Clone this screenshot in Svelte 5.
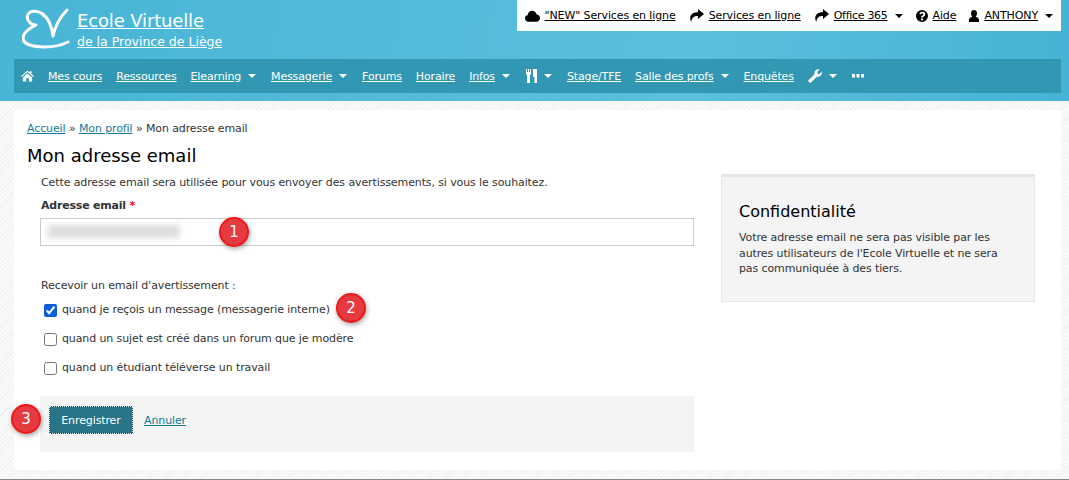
<script lang="ts">
  const navItems = [
    { label: 'Mes cours' },
    { label: 'Ressources' },
    { label: 'Elearning', caret: true },
    { label: 'Messagerie', caret: true },
    { label: 'Forums' },
    { label: 'Horaire' },
    { label: 'Infos', caret: true },
    { icon: 'food', caret: true },
    { label: 'Stage/TFE' },
    { label: 'Salle des profs', caret: true },
    { label: 'Enquêtes' },
    { icon: 'wrench', caret: true },
    { icon: 'more' }
  ]
</script>

<div class="page">
  <header class="header">
    <div class="brand">
      <svg class="logo" viewBox="0 0 50 44" width="50" height="44" aria-hidden="true">
        <path d="M21 7 C16 4 10 3 7 6 C3 10 7 18 14 18 C8 21 1 26 1 31 C1 37 10 40 23 40 C32 40 40 38 46 35" />
        <path d="M21 8 C26 10 30 20 31 29 C33 20 38 10 45 3" />
      </svg>
      <div class="brand-text">
        <a href="#top" class="brand-title">Ecole Virtuelle</a>
        <a href="#top" class="brand-sub">de la Province de Liège</a>
      </div>
    </div>

    <ul class="toplinks">
      <li>
        <svg class="ico" viewBox="0 0 16 12" width="15" height="12"><path d="M4 12 C1 12 0 10 0 8.300 C0 6.500 1.300 5.300 2.800 5.200 C3 2.500 5 0.500 7.700 0.500 C10 0.500 11.700 2 12.200 4 C14.300 4.200 16 5.800 16 8 C16 10.300 14.300 12 12 12 Z" /></svg>
        <a href="#top">"NEW" Services en ligne</a>
      </li>
      <li>
        <svg class="ico" viewBox="0 0 15 13" width="15" height="13"><path d="M9 0 L15 5 L9 10 L9 7 C5 7 3 8 2.300 13 C0.500 9.500 0 3.500 9 3 Z" /></svg>
        <a href="#top">Services en ligne</a>
      </li>
      <li>
        <svg class="ico" viewBox="0 0 15 13" width="15" height="13"><path d="M9 0 L15 5 L9 10 L9 7 C5 7 3 8 2.300 13 C0.500 9.500 0 3.500 9 3 Z" /></svg>
        <a href="#top" class="office">Office 365</a><span class="caret dark"></span>
      </li>
      <li>
        <svg class="ico" viewBox="0 0 12 12" width="12" height="12"><path fill-rule="evenodd" d="M6 0 A6 6 0 1 0 6 12 A6 6 0 1 0 6 0 Z M5 8.500 H7 V10.300 H5 Z M5 7.600 C5 5.400 7.300 5.500 7.300 4.200 C7.300 3.100 5.500 3 4.600 4.400 L3.400 3.400 C5 1 9.300 1.500 9.300 4.200 C9.300 6.200 7 6.100 7 7.600 Z" /></svg>
        <a href="#top">Aide</a>
      </li>
      <li>
        <svg class="ico" viewBox="0 0 10 12" width="10" height="12"><path d="M5 0 C7 0 8 1.500 8 3.300 C8 4.800 7.300 6 6.700 6.500 C7 7.300 10 7.500 10 10 V12 H0 V10 C0 7.500 3 7.300 3.300 6.500 C2.700 6 2 4.800 2 3.300 C2 1.500 3 0 5 0 Z" /></svg>
        <a href="#top">ANTHONY</a><span class="caret dark"></span>
      </li>
    </ul>

    <nav class="nav">
      <svg class="nav-home" viewBox="0 0 14 12" width="13" height="12"><path d="M7 0 L9.500 2.200 V1 H11.300 V3.800 L14 6.300 L13.200 7.200 L7 1.800 L0.800 7.200 L0 6.300 Z M2 7.500 L7 3.200 L12 7.500 V12 H8.500 V8.500 H5.500 V12 H2 Z" /></svg>
      {#each navItems as item}
        <span class="nav-item" class:food={item.icon === 'food'}>
          {#if item.label}
            <a href="#top">{item.label}</a>
          {:else if item.icon === 'food'}
            <svg viewBox="0 0 12 14" width="12" height="14"><path d="M0 0 H1 V3 H2 V0 H3 V3 H4 V0 H5 V5 L4 6 V14 H1 V6 L0 5 Z M7 0 H11 V14 H8.500 V8 H7 Z" /></svg>
          {:else if item.icon === 'wrench'}
            <svg viewBox="0 0 13 13" width="14" height="14"><path d="M0.500 10.300 L6 5 C5.300 2.500 7.500 -0.300 11 0.300 L8.500 2.800 L9 4.300 L10.500 4.800 L13 2.300 C13.400 5.500 10.800 8 8.200 7.200 L2.800 12.600 C1.800 13.400 -0.300 11.500 0.500 10.300 Z" /></svg>
          {:else}
            <svg viewBox="0 0 12 4" width="12" height="4"><path d="M0 0 H3 V3.500 H0 Z M4.500 0 H7.500 V3.500 H4.500 Z M9 0 H12 V3.500 H9 Z" /></svg>
          {/if}
          {#if item.caret}<span class="caret"></span>{/if}
        </span>
      {/each}
    </nav>
  </header>

  <main class="panel">
    <p class="crumbs"><a href="#top">Accueil</a> » <a href="#top">Mon profil</a> » Mon adresse email</p>
    <h1>Mon adresse email</h1>

    <div class="columns">
      <form class="form">
        <p class="intro">Cette adresse email sera utilisée pour vous envoyer des avertissements, si vous le souhaitez.</p>
        <label class="field-label" for="email">Adresse email <span class="req">*</span></label>
        <div class="input-wrap">
          <input id="email" type="text" />
          <span class="blur"></span>
          <span class="badge badge-1">1</span>
        </div>

        <p class="legend">Recevoir un email d'avertissement :</p>
        <label class="check">
          <input type="checkbox" checked />
          <span class="check-text">quand je reçois un message (messagerie interne)</span>
          <span class="badge badge-2">2</span>
        </label>
        <label class="check">
          <input type="checkbox" />
          <span class="check-text">quand un sujet est créé dans un forum que je modère</span>
        </label>
        <label class="check">
          <input type="checkbox" />
          <span class="check-text">quand un étudiant téléverse un travail</span>
        </label>

        <div class="actions">
          <span class="badge badge-3">3</span>
          <button type="button">Enregistrer</button>
          <a href="#top">Annuler</a>
        </div>
      </form>

      <aside class="card">
        <h2>Confidentialité</h2>
        <p>Votre adresse email ne sera pas visible par les autres utilisateurs de l'Ecole Virtuelle et ne sera pas communiquée à des tiers.</p>
      </aside>
    </div>
  </main>
  <div class="foot-line"></div>
</div>

<style>
  :global(body) {
    margin: 0;
  }

  .page {
    width: 1069px;
    height: 480px;
    overflow: hidden;
    font-family: "DejaVu Sans", Verdana, sans-serif;
    font-size: 11px;
    letter-spacing: -0.11px;
    color: #333;
    display: flex;
    flex-direction: column;
    background: repeating-linear-gradient(135deg, #f1f1f1 0 1px, #fafafa 1px 3px);
  }

  a {
    color: inherit;
  }

  .header {
    height: 101px;
    flex: none;
    box-sizing: border-box;
    padding: 0 8px 0 14px;
    background: linear-gradient(100deg, #47b5d6 0%, #5bbfdd 65%, #45b3d5 100%);
    display: grid;
    grid-template-columns: auto 1fr;
    grid-template-rows: 59px 34px;
  }

  .brand {
    display: flex;
    gap: 5px;
    padding: 7px 0 0 8px;
    color: #fff;
  }

  .logo {
    fill: none;
    stroke: #fff;
    stroke-width: 3;
    stroke-linecap: round;
    stroke-linejoin: round;
  }

  .brand-text {
    display: flex;
    flex-direction: column;
    align-items: flex-start;
    padding-top: 3px;
  }

  .brand-title {
    font-size: 18px;
    line-height: 22px;
    letter-spacing: -0.14px;
  }

  .brand-sub {
    font-size: 12.500px;
    line-height: 20px;
    letter-spacing: 0;
  }

  .toplinks {
    justify-self: end;
    align-self: start;
    list-style: none;
    margin: 0;
    height: 31px;
    box-sizing: border-box;
    background: #fff;
    color: #000;
    display: flex;
    align-items: center;
    gap: 13px;
    padding: 0 8px 0 8px;
  }

  .toplinks li {
    display: flex;
    align-items: center;
    gap: 5px;
  }

  .office {
    letter-spacing: -0.3px;
  }

  .ico {
    fill: #000;
    flex: none;
  }

  .caret {
    width: 0;
    height: 0;
    margin: 0 1px 0 7px;
    border-left: 4px solid transparent;
    border-right: 4px solid transparent;
    border-top: 4px solid #fff;
  }

  .caret.dark {
    margin: 0 0 0 2px;
    border-top-color: #000;
  }

  .nav {
    grid-column: 1 / -1;
    background: #3297b2;
    color: #fff;
    display: flex;
    align-items: center;
    gap: 14px;
    padding: 0 7px;
    letter-spacing: -0.15px;
  }

  .nav svg {
    fill: #fff;
    flex: none;
  }

  .nav-item {
    display: flex;
    align-items: center;
  }

  .nav-item.food {
    margin-left: 1px;
  }

  .nav-item.food .caret {
    margin-left: 6px;
  }

  .panel {
    margin: 9px 8px 9px 14px;
    height: 360px;
    box-sizing: border-box;
    background: #fff;
    padding: 11px 26px 0 13px;
  }

  .crumbs {
    margin: 0;
    line-height: 16px;
  }

  .crumbs a,
  .actions a {
    color: #0f7c99;
  }

  h1 {
    margin: 7px 0 0;
    font-size: 18px;
    font-weight: 400;
    line-height: 24px;
    letter-spacing: 0;
    color: #000;
  }

  .columns {
    display: flex;
    justify-content: space-between;
    margin-top: 6px;
  }

  .form {
    width: 654px;
    margin-left: 13px;
    display: flex;
    flex-direction: column;
  }

  .intro {
    margin: 1px 0 0 1px;
    line-height: 16px;
  }

  .field-label {
    margin: 7px 0 0 1px;
    font-weight: 700;
    line-height: 16px;
    letter-spacing: -0.2px;
  }

  .req {
    color: #f00;
  }

  .input-wrap {
    position: relative;
    margin-top: 4px;
    height: 28px;
  }

  #email {
    display: block;
    width: 100%;
    height: 100%;
    box-sizing: border-box;
    border: 1px solid #ccc;
    margin: 0;
    background: #fff;
  }

  .blur {
    position: absolute;
    left: 8px;
    top: 7px;
    width: 132px;
    height: 13px;
    background: #dcdcdc;
    filter: blur(3px);
  }

  .legend {
    margin: 32px 0 0 1px;
    line-height: 16px;
  }

  .check {
    position: relative;
    display: flex;
    align-items: center;
    gap: 5px;
    height: 29px;
    padding-left: 4px;
  }

  .check-text {
    margin-top: -2px;
  }

  .legend + .check {
    margin-top: 2px;
  }

  .check input {
    margin: 0;
    width: 13px;
    height: 13px;
    accent-color: #0a5fd6;
  }

  .actions {
    position: relative;
    margin-top: 13px;
    height: 56px;
    box-sizing: border-box;
    padding: 0 0 8px 9px;
    background: #f4f4f4;
    display: flex;
    align-items: center;
    gap: 11px;
  }

  button {
    width: 84px;
    height: 28px;
    box-sizing: border-box;
    background: linear-gradient(#287488, #287488) padding-box, #123f4d border-box;
    color: #fff;
    font: inherit;
    letter-spacing: inherit;
    border: 1px dotted #dfeef2;
  }

  .card {
    width: 314px;
    height: 128px;
    box-sizing: border-box;
    background: #f4f4f4;
    border: 1px solid #e6e6e6;
    border-top-width: 3px;
    padding: 24px 17px 0;
  }

  h2 {
    margin: 0;
    font-size: 16px;
    font-weight: 400;
    line-height: 22px;
    letter-spacing: 0;
    color: #000;
  }

  .card p {
    margin: 7px 0 0;
    line-height: 15.500px;
  }

  .badge {
    position: absolute;
    width: 30px;
    height: 30px;
    box-sizing: border-box;
    border-radius: 50%;
    background: #e53a40;
    border: 2px solid #f01818;
    color: #fff;
    font-size: 15px;
    line-height: 26px;
    text-align: center;
    box-shadow: 1px 2px 5px rgba(0, 0, 0, 0.35);
  }

  .badge-1 {
    left: 179px;
    top: -1px;
  }

  .badge-2 {
    left: 296px;
    top: -3px;
  }

  .badge-3 {
    left: -29px;
    top: 8px;
  }

  .foot-line {
    height: 1px;
    background: #888;
    flex: none;
    margin-top: auto;
  }
</style>
